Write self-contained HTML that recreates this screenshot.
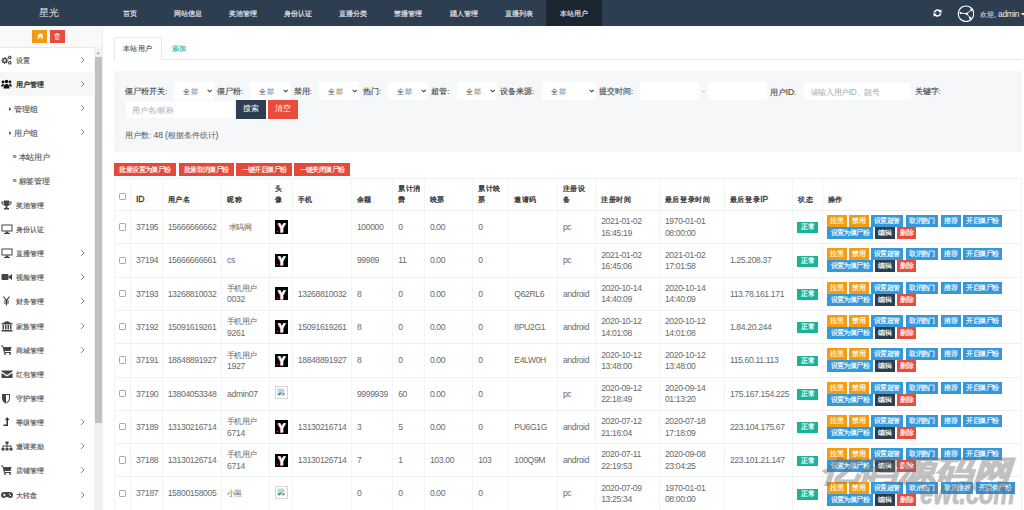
<!DOCTYPE html>
<html><head><meta charset="utf-8"><title>用户管理</title>
<style>
*{box-sizing:border-box;margin:0;padding:0}
html,body{width:1024px;height:510px;overflow:hidden;background:#fff;font-family:"Liberation Sans",sans-serif;color:#676a6c}
.abs{position:absolute}
#hdr{position:absolute;left:0;top:0;width:1024px;height:26px;background:#2e3e51}
#hdr .brand{position:absolute;left:38.6px;top:5.5px;font-size:10.4px;color:#e8ecf0;font-weight:500}
#hdr .nav{position:absolute;top:8.5px;font-size:7.3px;color:#e6e9ed;-webkit-text-stroke:0.15px #e6e9ed;white-space:nowrap}
#hdr .act{position:absolute;left:546px;top:0;width:55.6px;height:26px;background:#1c2631}
#side{position:absolute;left:0;top:26px;width:104px;height:484px;background:#fff}
.sbtn{position:absolute;top:30px;width:15.5px;height:12.5px}
.sitem{position:absolute;left:0;width:93.6px;height:24.2px;font-size:7.4px;color:#555;-webkit-text-stroke:0.15px #555;white-space:nowrap}
.sitem .ic{position:absolute;left:1px;top:7px}
.sitem .tx{position:absolute;left:16px;top:8px}
.sitem .chev{position:absolute;left:80px;top:8px}
#sb{position:absolute;left:93.6px;top:47px;width:9px;height:463px;background:#f1f1f1}
#thumb{position:absolute;left:94.6px;top:57px;width:7px;height:366px;background:#c1c1c1}
.tab{position:absolute;font-size:7px;letter-spacing:0.45px;-webkit-text-stroke:0.15px currentColor;white-space:nowrap}
#filter{position:absolute;left:114.2px;top:71px;width:907.5px;height:81px;background:#f6f7f9}
.lbl{position:absolute;font-size:7.6px;color:#4a4a4a;-webkit-text-stroke:0.15px #4a4a4a;white-space:nowrap;top:87px}
.sel{position:absolute;top:82.2px;height:17.6px;background:#fff;font-size:7px;letter-spacing:0.6px;color:#555}
.sel span{position:absolute;left:9.6px;top:4.6px}
.sel svg{position:absolute;right:2.3px;top:6.6px}
.inp{position:absolute;background:#fff;font-size:7.4px;color:#aaa;white-space:nowrap}
.rbtn{position:absolute;top:163px;height:13px;background:#e5493a;color:#fff;font-size:7px;letter-spacing:-0.6px;-webkit-text-stroke:0.15px #fff;text-align:center;line-height:13px;white-space:nowrap}
.cell{position:absolute;font-size:8.6px;letter-spacing:-0.35px;color:#676a6c;white-space:nowrap;line-height:11.4px}
.cj{font-size:8px;letter-spacing:-0.7px}
.th{position:absolute;font-size:7px;letter-spacing:0.6px;color:#333;-webkit-text-stroke:0.3px #333;white-space:nowrap;line-height:11px}
.vl{position:absolute;width:1px;background:#f2f4f6}
.hl{position:absolute;height:1px;background:#eef0f2}
.cb{position:absolute;width:7px;height:7.4px;border:1px solid #a8a8a8;border-radius:1.2px;background:#fff}
.av{position:absolute;width:13.4px;height:13.4px;background:#000}
.lab{position:absolute;width:20.5px;height:10.9px;background:#1ab394;color:#fff;font-size:7px;letter-spacing:-0.7px;font-weight:bold;text-align:center;line-height:10.9px}
.ab{position:absolute;height:12px;color:#fff;font-size:7px;letter-spacing:-0.55px;-webkit-text-stroke:0.15px #fff;text-align:center;line-height:12px;white-space:nowrap}
.o{background:#f39c12}.bl{background:#3498db}.dk{background:#2c3e50}.rd{background:#e74c3c}
</style></head><body>

<div id="hdr"><div class="brand">星光</div><div class="act"></div>
<div class="nav" style="left:123.4px">首页</div>
<div class="nav" style="left:173.8px">网站信息</div>
<div class="nav" style="left:228.9px">奖池管理</div>
<div class="nav" style="left:284.3px">身份认证</div>
<div class="nav" style="left:339.2px">直播分类</div>
<div class="nav" style="left:394.3px">禁播管理</div>
<div class="nav" style="left:449.5px">踢人管理</div>
<div class="nav" style="left:504.9px">直播列表</div>
<div class="nav" style="left:559.6px">本站用户</div>
<svg class="abs" style="left:932.5px;top:9.2px" width="9" height="8" viewBox="0 0 18 16"><path d="M2.5 7.2A6.5 6.5 0 0 1 13.6 4.2" stroke="#fff" stroke-width="3" fill="none"/><path d="M10.5 6.5L17.5 7.5L16.5 0.5z" fill="#fff"/><path d="M15.5 8.8A6.5 6.5 0 0 1 4.4 11.8" stroke="#fff" stroke-width="3" fill="none"/><path d="M7.5 9.5L0.5 8.5L1.5 15.5z" fill="#fff"/></svg>
<svg class="abs" style="left:956.5px;top:4.8px" width="17.5" height="17.5" viewBox="0 0 36 36"><circle cx="18.5" cy="18" r="16" stroke="#fff" stroke-width="2.4" fill="none"/><path d="M7 16.5L20.3 18L29.5 10.2M20.3 18L27.1 26.7" stroke="#fff" stroke-width="1.8" fill="none"/><circle cx="7.2" cy="16.5" r="2.3" fill="#fff"/><circle cx="20.3" cy="18" r="2.6" fill="#fff"/><circle cx="29.5" cy="10.2" r="2.3" fill="#fff"/><circle cx="27.1" cy="26.7" r="2.5" fill="#fff"/></svg>
<div class="abs" style="left:980px;top:9.3px;font-size:7.4px;color:#e8ecf0;font-weight:500;white-space:nowrap">欢迎, <span style="font-size:8.4px;letter-spacing:-0.35px;font-weight:normal">admin</span></div>
<svg class="abs" style="left:1020.5px;top:13.2px" width="4" height="2.6" viewBox="0 0 5 3"><path d="M0 0h5L2.5 3z" fill="#fff"/></svg>
</div>
<div id="side"></div><div class="abs" style="left:0;top:26px;width:102px;height:20.6px;background:#f9f9f9"></div>
<div class="sbtn" style="left:31.8px;background:#f39c12"><svg class="abs" style="left:4.8px;top:3.4px" width="6.4" height="6" viewBox="0 0 16 14"><path d="M8 0L0 7h2v7h4V9h4v5h4V7h2z" fill="#fff"/><rect x="11" y="1" width="2.5" height="4" fill="#fff"/></svg></div>
<div class="sbtn" style="left:49.8px;background:#e74c3c"><svg class="abs" style="left:4.6px;top:2.8px" width="6.4" height="7.4" viewBox="0 0 12 14"><path d="M0.5 2h11v1.6h-11z M4 0h4v2H4z" fill="#fcd"/><path d="M1.5 4.5h9l-0.8 9H2.3z M3.3 6v6h1.2V6z M5.4 6v6h1.2V6z M7.5 6v6h1.2V6z" fill="#fcd" fill-rule="evenodd"/></svg></div>
<div class="hl" style="left:0;top:46.5px;width:94px;background:#e8e8e8"></div>
<div class="vl" style="left:102.4px;top:26px;height:484px;background:#ececec"></div>
<div class="sitem" style="top:47.9px;">
<span class="ic"><svg width="11" height="10" viewBox="0 0 22 20"><g fill="#444" fill-rule="evenodd"><path d="M14.50 11.00 L14.37 12.37 L12.16 12.93 L11.69 13.80 L12.45 15.95 L11.39 16.82 L9.43 15.66 L8.48 15.94 L7.50 18.00 L6.13 17.87 L5.57 15.66 L4.70 15.19 L2.55 15.95 L1.68 14.89 L2.84 12.93 L2.56 11.98 L0.50 11.00 L0.63 9.63 L2.84 9.07 L3.31 8.20 L2.55 6.05 L3.61 5.18 L5.57 6.34 L6.52 6.06 L7.50 4.00 L8.87 4.13 L9.43 6.34 L10.30 6.81 L12.45 6.05 L13.32 7.11 L12.16 9.07 L12.44 10.02Z M9.8 11a2.3 2.3 0 1 0 -4.6 0a2.3 2.3 0 1 0 4.6 0Z"/><path d="M21.80 5.00 L21.65 6.11 L20.18 6.55 L19.69 7.19 L19.65 8.72 L18.61 9.15 L17.50 8.10 L16.70 7.99 L15.35 8.72 L14.46 8.04 L14.82 6.55 L14.51 5.80 L13.20 5.00 L13.35 3.89 L14.82 3.45 L15.31 2.81 L15.35 1.28 L16.39 0.85 L17.50 1.90 L18.30 2.01 L19.65 1.28 L20.54 1.96 L20.18 3.45 L20.49 4.20Z M18.9 5a1.4 1.4 0 1 0 -2.8 0a1.4 1.4 0 1 0 2.8 0Z"/><path d="M21.80 15.50 L21.65 16.61 L20.18 17.05 L19.69 17.69 L19.65 19.22 L18.61 19.65 L17.50 18.60 L16.70 18.49 L15.35 19.22 L14.46 18.54 L14.82 17.05 L14.51 16.30 L13.20 15.50 L13.35 14.39 L14.82 13.95 L15.31 13.31 L15.35 11.78 L16.39 11.35 L17.50 12.40 L18.30 12.51 L19.65 11.78 L20.54 12.46 L20.18 13.95 L20.49 14.70Z M18.9 15.5a1.4 1.4 0 1 0 -2.8 0a1.4 1.4 0 1 0 2.8 0Z"/></g></svg></span><span class="tx">设置</span>
<svg class="chev" width="5" height="8" viewBox="0 0 5 8"><path d="M1.2 1.2l2.8 2.8-2.8 2.8" stroke="#7a7a7a" stroke-width="0.95" fill="none"/></svg>
</div>
<div class="sitem" style="top:72.0px;background:#f7f7f7;color:#333;-webkit-text-stroke:0.3px #333;">
<span class="ic"><svg width="11" height="10" viewBox="0 0 22 20"><g fill="#111"><circle cx="11" cy="5" r="3.6"/><circle cx="4" cy="6" r="2.8"/><circle cx="18" cy="6" r="2.8"/><path d="M5 19 Q5 10 11 10 Q17 10 17 19Z"/><path d="M0 15 Q0 10 4 10 Q6 10 6.5 11 Q4.5 13 4.5 15Z"/><path d="M22 15 Q22 10 18 10 Q16 10 15.5 11 Q17.5 13 17.5 15Z"/></g></svg></span><span class="tx">用户管理</span>
<svg class="chev" width="5" height="8" viewBox="0 0 5 8"><path d="M1.2 1.2l2.8 2.8-2.8 2.8" stroke="#7a7a7a" stroke-width="0.95" fill="none"/></svg>
</div>
<div class="sitem" style="top:96.2px;">
<svg class="abs" style="left:8.5px;top:10.5px" width="2.5" height="4" viewBox="0 0 3 5"><path d="M0 0l3 2.5L0 5z" fill="#555"/></svg><span class="tx" style="left:14.2px;top:7.6px;font-size:8px;letter-spacing:-0.2px">管理组</span>
<svg class="chev" width="5" height="8" viewBox="0 0 5 8"><path d="M1.2 1.2l2.8 2.8-2.8 2.8" stroke="#7a7a7a" stroke-width="0.95" fill="none"/></svg>
</div>
<div class="sitem" style="top:120.3px;">
<svg class="abs" style="left:8.5px;top:10.5px" width="2.5" height="4" viewBox="0 0 3 5"><path d="M0 0l3 2.5L0 5z" fill="#555"/></svg><span class="tx" style="left:14.2px;top:7.6px;font-size:8px;letter-spacing:-0.2px">用户组</span>
<svg class="chev" width="5" height="8" viewBox="0 0 5 8"><path d="M1.2 1.2l2.8 2.8-2.8 2.8" stroke="#7a7a7a" stroke-width="0.95" fill="none"/></svg>
</div>
<div class="sitem" style="top:144.5px;">
<span class="abs" style="left:12.5px;top:7.6px;font-size:7.5px;font-family:&quot;Liberation Sans&quot;,sans-serif">&raquo;</span><span class="tx" style="left:18.6px;top:7.6px;font-size:8px;letter-spacing:-0.3px">本站用户</span>
</div>
<div class="sitem" style="top:168.7px;">
<span class="abs" style="left:12.5px;top:7.6px;font-size:7.5px;font-family:&quot;Liberation Sans&quot;,sans-serif">&raquo;</span><span class="tx" style="left:18.6px;top:7.6px;font-size:8px;letter-spacing:-0.3px">标签管理</span>
</div>
<div class="sitem" style="top:192.8px;">
<span class="ic"><svg width="11" height="10" viewBox="0 0 22 20"><g fill="#444"><path d="M6 1h10v7q0 5-5 5t-5-5z"/><path d="M9 13h4v3h3v3H6v-3h3z"/><path d="M6 3H1v3q0 4 5 4v-2q-3 0-3-2V5h3z"/><path d="M16 3h5v3q0 4-5 4v-2q3 0 3-2V5h-3z"/></g></svg></span><span class="tx">奖池管理</span>
</div>
<div class="sitem" style="top:217.0px;">
<span class="ic"><svg width="12" height="10" viewBox="0 0 24 20"><g fill="#444"><path d="M1 1h22v14H1z M3 3v10h18V3z" fill-rule="evenodd"/><path d="M9 15h6v3h3v2H6v-2h3z"/></g></svg></span><span class="tx">身份认证</span>
</div>
<div class="sitem" style="top:241.1px;">
<span class="ic"><svg width="12" height="10" viewBox="0 0 24 20"><g fill="#444"><path d="M1 1h22v14H1z M3 3v10h18V3z" fill-rule="evenodd"/><path d="M9 15h6v3h3v2H6v-2h3z"/></g></svg></span><span class="tx">直播管理</span>
<svg class="chev" width="5" height="8" viewBox="0 0 5 8"><path d="M1.2 1.2l2.8 2.8-2.8 2.8" stroke="#7a7a7a" stroke-width="0.95" fill="none"/></svg>
</div>
<div class="sitem" style="top:265.2px;">
<span class="ic"><svg width="12" height="10" viewBox="0 0 24 20"><g fill="#444"><rect x="1" y="4" width="14" height="12" rx="2"/><path d="M15 9l7-5v12l-7-5z"/></g></svg></span><span class="tx">视频管理</span>
<svg class="chev" width="5" height="8" viewBox="0 0 5 8"><path d="M1.2 1.2l2.8 2.8-2.8 2.8" stroke="#7a7a7a" stroke-width="0.95" fill="none"/></svg>
</div>
<div class="sitem" style="top:289.4px;">
<span class="ic"><svg width="11" height="10" viewBox="0 0 22 20"><g stroke="#444" stroke-width="2.4" fill="none"><path d="M5 1l6 8 6-8M11 9v10M6 10h10M6 14h10"/></g></svg></span><span class="tx">财务管理</span>
<svg class="chev" width="5" height="8" viewBox="0 0 5 8"><path d="M1.2 1.2l2.8 2.8-2.8 2.8" stroke="#7a7a7a" stroke-width="0.95" fill="none"/></svg>
</div>
<div class="sitem" style="top:313.5px;">
<span class="ic"><svg width="12" height="11" viewBox="0 0 24 22"><g fill="#444"><path d="M12 0L1 5v2h22V5z"/><rect x="3" y="8" width="3" height="9"/><rect x="8" y="8" width="3" height="9"/><rect x="13" y="8" width="3" height="9"/><rect x="18" y="8" width="3" height="9"/><rect x="1" y="18" width="22" height="3"/></g></svg></span><span class="tx">家族管理</span>
<svg class="chev" width="5" height="8" viewBox="0 0 5 8"><path d="M1.2 1.2l2.8 2.8-2.8 2.8" stroke="#7a7a7a" stroke-width="0.95" fill="none"/></svg>
</div>
<div class="sitem" style="top:337.7px;">
<span class="ic"><svg width="11" height="10" viewBox="0 0 22 20"><g fill="#444"><path d="M0 1h4l1 3h16l-2 8H7l1 2h12v2H6L3 3H0z"/><circle cx="8" cy="18" r="1.8"/><circle cx="18" cy="18" r="1.8"/></g></svg></span><span class="tx">商城管理</span>
<svg class="chev" width="5" height="8" viewBox="0 0 5 8"><path d="M1.2 1.2l2.8 2.8-2.8 2.8" stroke="#7a7a7a" stroke-width="0.95" fill="none"/></svg>
</div>
<div class="sitem" style="top:361.8px;">
<span class="ic"><svg width="12" height="10" viewBox="0 0 24 20"><g fill="#444"><path d="M1 3h22v2l-11 7L1 5z"/><path d="M1 8l11 7 11-7v10H1z"/></g></svg></span><span class="tx">红包管理</span>
</div>
<div class="sitem" style="top:386.0px;">
<span class="ic"><svg width="10" height="11" viewBox="0 0 20 22"><g fill="#444"><path d="M2 2h16v8q0 8-8 11Q2 18 2 10z M10 4v15q6-3 6-9V4z" fill-rule="evenodd"/></g></svg></span><span class="tx">守护管理</span>
</div>
<div class="sitem" style="top:410.1px;">
<span class="ic"><svg width="10" height="10" viewBox="0 0 20 20"><g fill="#333"><path d="M12 0l5 6h-3v12H5v-3h6V6H8z"/></g></svg></span><span class="tx">等级管理</span>
<svg class="chev" width="5" height="8" viewBox="0 0 5 8"><path d="M1.2 1.2l2.8 2.8-2.8 2.8" stroke="#7a7a7a" stroke-width="0.95" fill="none"/></svg>
</div>
<div class="sitem" style="top:434.3px;">
<span class="ic"><svg width="12" height="10" viewBox="0 0 24 20"><g fill="#444"><rect x="9" y="1" width="6" height="5"/><rect x="1" y="14" width="6" height="5"/><rect x="9" y="14" width="6" height="5"/><rect x="17" y="14" width="6" height="5"/><path d="M11 6h2v3h8v5h-2v-3h-6v3h-2v-3H5v3H3V9h8z"/></g></svg></span><span class="tx">邀请奖励</span>
<svg class="chev" width="5" height="8" viewBox="0 0 5 8"><path d="M1.2 1.2l2.8 2.8-2.8 2.8" stroke="#7a7a7a" stroke-width="0.95" fill="none"/></svg>
</div>
<div class="sitem" style="top:458.4px;">
<span class="ic"><svg width="11" height="10" viewBox="0 0 22 20"><g fill="#444"><path d="M0 1h4l1 3h16l-2 8H7l1 2h12v2H6L3 3H0z"/><circle cx="8" cy="18" r="1.8"/><circle cx="18" cy="18" r="1.8"/></g></svg></span><span class="tx">店铺管理</span>
<svg class="chev" width="5" height="8" viewBox="0 0 5 8"><path d="M1.2 1.2l2.8 2.8-2.8 2.8" stroke="#7a7a7a" stroke-width="0.95" fill="none"/></svg>
</div>
<div class="sitem" style="top:482.6px;">
<span class="ic"><svg width="12" height="10" viewBox="0 0 24 20"><g fill="#444"><path d="M6 4h12q6 0 6 6t-6 6q-3 0-4-2h-4q-1 2-4 2Q0 16 0 10t6-6z"/></g><g fill="#fff"><rect x="4" y="9" width="5" height="2"/><rect x="5.5" y="7.5" width="2" height="5"/><circle cx="17" cy="8" r="1.3"/><circle cx="19" cy="11" r="1.3"/></g></svg></span><span class="tx">大转盘</span>
<svg class="chev" width="5" height="8" viewBox="0 0 5 8"><path d="M1.2 1.2l2.8 2.8-2.8 2.8" stroke="#7a7a7a" stroke-width="0.95" fill="none"/></svg>
</div>
<div id="sb"></div><div id="thumb"></div>
<svg class="abs" style="left:96px;top:51.5px" width="4" height="2.5" viewBox="0 0 5 3"><path d="M0 3L2.5 0 5 3z" fill="#a3a3a3"/></svg>
<div class="abs" style="left:114.2px;top:37px;width:47.8px;height:23px;border:1px solid #e7eaec;border-bottom:none;background:#fff"></div>
<div class="hl" style="left:161.5px;top:59.4px;width:860px;background:#e7eaec"></div>
<div class="tab" style="left:123px;top:44.2px;color:#555">本站用户</div>
<div class="tab" style="left:171.6px;top:44.2px;color:#1ab394">添加</div>
<div id="filter"></div>
<div class="lbl" style="left:125.2px">僵尸粉开关:</div>
<div class="lbl" style="left:217px">僵尸粉:</div>
<div class="lbl" style="left:293.6px">禁用:</div>
<div class="lbl" style="left:362.7px">热门:</div>
<div class="lbl" style="left:431.4px">超管:</div>
<div class="lbl" style="left:500.3px">设备来源:</div>
<div class="lbl" style="left:598.9px">提交时间:</div>
<div class="lbl" style="left:769.8px">用户<span style='font-size:8.4px;letter-spacing:-0.2px'>ID</span>:</div>
<div class="lbl" style="left:914.5px">关键字:</div>
<div class="sel" style="left:173.6px;width:40.6px"><span>全部</span><svg width="5.4" height="4" viewBox="0 0 10 7"><path d="M1.2 1.5l3.8 3.6 3.8-3.6" stroke="#3b4654" stroke-width="1.9" fill="none"/></svg></div>
<div class="sel" style="left:249.9px;width:40.3px"><span>全部</span><svg width="5.4" height="4" viewBox="0 0 10 7"><path d="M1.2 1.5l3.8 3.6 3.8-3.6" stroke="#3b4654" stroke-width="1.9" fill="none"/></svg></div>
<div class="sel" style="left:318.9px;width:40.6px"><span>全部</span><svg width="5.4" height="4" viewBox="0 0 10 7"><path d="M1.2 1.5l3.8 3.6 3.8-3.6" stroke="#3b4654" stroke-width="1.9" fill="none"/></svg></div>
<div class="sel" style="left:387.7px;width:40.6px"><span>全部</span><svg width="5.4" height="4" viewBox="0 0 10 7"><path d="M1.2 1.5l3.8 3.6 3.8-3.6" stroke="#3b4654" stroke-width="1.9" fill="none"/></svg></div>
<div class="sel" style="left:456.6px;width:40.6px"><span>全部</span><svg width="5.4" height="4" viewBox="0 0 10 7"><path d="M1.2 1.5l3.8 3.6 3.8-3.6" stroke="#3b4654" stroke-width="1.9" fill="none"/></svg></div>
<div class="sel" style="left:541.7px;width:54.6px"><span>全部</span><svg width="5.4" height="4" viewBox="0 0 10 7"><path d="M1.2 1.5l3.8 3.6 3.8-3.6" stroke="#3b4654" stroke-width="1.9" fill="none"/></svg></div>
<div class="inp" style="left:640px;top:82.2px;width:59.4px;height:17.8px"></div>
<div class="abs" style="left:702.2px;top:85.5px;font-size:8px;color:#888">-</div>
<div class="inp" style="left:707.5px;top:82.2px;width:59.7px;height:17.8px"></div>
<div class="inp" style="left:803.9px;top:82.5px;width:107.4px;height:17.5px;padding:4px 0 0 7px;font-size:7.7px;letter-spacing:-0.45px">请输入用户<span style="font-size:8.4px;letter-spacing:-0.2px">ID</span>、靓号</div>
<div class="inp" style="left:125.5px;top:100.6px;width:108.7px;height:17.2px;padding:4px 0 0 6px;font-size:8px">用户名/昵称</div>
<div class="abs" style="left:236px;top:100.3px;width:29.9px;height:18.7px;background:#2c3e50;color:#fff;font-size:8px;text-align:center;line-height:18.7px">搜索</div>
<div class="abs" style="left:268px;top:100.3px;width:29.6px;height:18.7px;background:#e74c3c;color:#fff;font-size:8px;text-align:center;line-height:18.7px">清空</div>
<div class="abs" style="left:125.2px;top:130.4px;font-size:7.9px;color:#555;font-weight:500;white-space:nowrap">用户数:<span style="font-size:8.6px;letter-spacing:-0.2px;font-weight:normal"> 48 (</span>根据条件统计<span style="font-size:8.6px;font-weight:normal">)</span></div>
<div class="rbtn" style="left:113.9px;width:62.1px">批量设置为僵尸粉</div>
<div class="rbtn" style="left:178.5px;width:55.5px">批量取消僵尸粉</div>
<div class="rbtn" style="left:236px;width:56.0px">一键开启僵尸粉</div>
<div class="rbtn" style="left:294px;width:56.0px">一键关闭僵尸粉</div>
<div class="vl" style="left:114.0px;top:178.2px;height:331.8px"></div>
<div class="vl" style="left:130.1px;top:178.2px;height:331.8px"></div>
<div class="vl" style="left:161.7px;top:178.2px;height:331.8px"></div>
<div class="vl" style="left:221.1px;top:178.2px;height:331.8px"></div>
<div class="vl" style="left:269.1px;top:178.2px;height:331.8px"></div>
<div class="vl" style="left:291.8px;top:178.2px;height:331.8px"></div>
<div class="vl" style="left:350.9px;top:178.2px;height:331.8px"></div>
<div class="vl" style="left:392.2px;top:178.2px;height:331.8px"></div>
<div class="vl" style="left:423.9px;top:178.2px;height:331.8px"></div>
<div class="vl" style="left:472.2px;top:178.2px;height:331.8px"></div>
<div class="vl" style="left:508.3px;top:178.2px;height:331.8px"></div>
<div class="vl" style="left:556.9px;top:178.2px;height:331.8px"></div>
<div class="vl" style="left:595.2px;top:178.2px;height:331.8px"></div>
<div class="vl" style="left:658.9px;top:178.2px;height:331.8px"></div>
<div class="vl" style="left:723.9px;top:178.2px;height:331.8px"></div>
<div class="vl" style="left:792.0px;top:178.2px;height:331.8px"></div>
<div class="vl" style="left:821.9px;top:178.2px;height:331.8px"></div>
<div class="vl" style="left:1020.9px;top:178.2px;height:331.8px"></div>
<div class="hl" style="left:114.5px;top:177.7px;width:906.9px"></div>
<div class="hl" style="left:114.5px;top:210.0px;width:906.9px"></div>
<div class="hl" style="left:114.5px;top:243.3px;width:906.9px"></div>
<div class="hl" style="left:114.5px;top:276.6px;width:906.9px"></div>
<div class="hl" style="left:114.5px;top:309.9px;width:906.9px"></div>
<div class="hl" style="left:114.5px;top:343.2px;width:906.9px"></div>
<div class="hl" style="left:114.5px;top:376.5px;width:906.9px"></div>
<div class="hl" style="left:114.5px;top:409.8px;width:906.9px"></div>
<div class="hl" style="left:114.5px;top:443.1px;width:906.9px"></div>
<div class="hl" style="left:114.5px;top:476.4px;width:906.9px"></div>
<div class="hl" style="left:114.5px;top:509.7px;width:906.9px"></div>
<div class="cb" style="left:119px;top:192.5px"></div>
<div class="th" style="left:136.1px;top:194.3px"><span style='font-size:8.6px;letter-spacing:-0.2px'>ID</span></div>
<div class="th" style="left:167.7px;top:194.3px">用户名</div>
<div class="th" style="left:227.1px;top:194.3px">昵称</div>
<div class="th" style="left:275.1px;top:183px">头<br>像</div>
<div class="th" style="left:297.8px;top:194.3px">手机</div>
<div class="th" style="left:356.9px;top:194.3px">余额</div>
<div class="th" style="left:398.2px;top:183px">累计消<br>费</div>
<div class="th" style="left:429.9px;top:194.3px">映票</div>
<div class="th" style="left:478.2px;top:183px">累计映<br>票</div>
<div class="th" style="left:514.3px;top:194.3px">邀请码</div>
<div class="th" style="left:562.9px;top:183px">注册设<br>备</div>
<div class="th" style="left:601.2px;top:194.3px">注册时间</div>
<div class="th" style="left:664.9px;top:194.3px">最后登录时间</div>
<div class="th" style="left:729.9px;top:194.3px">最后登录<span style='font-size:8.6px;letter-spacing:-0.2px'>IP</span></div>
<div class="th" style="left:798.0px;top:194.3px">状态</div>
<div class="th" style="left:827.9px;top:194.3px">操作</div>
<div class="cb" style="left:119px;top:223.2px"></div>
<div class="cell" style="left:136.1px;top:222.1px">37195</div>
<div class="cell" style="left:167.7px;top:222.1px">15666666662</div>
<div class="cell" style="left:229.1px;top:222.1px"><span class="cj">求码网</span></div>
<div class="cell" style="left:356.9px;top:222.1px">100000</div>
<div class="cell" style="left:398.2px;top:222.1px">0</div>
<div class="cell" style="left:429.9px;top:222.1px">0.00</div>
<div class="cell" style="left:478.2px;top:222.1px">0</div>
<div class="cell" style="left:562.9px;top:222.1px">pc</div>
<div class="cell" style="left:601.2px;top:216.3px">2021-01-02<br>16:45:19</div>
<div class="cell" style="left:664.9px;top:216.3px">1970-01-01<br>08:00:00</div>
<div class="av" style="left:274.6px;top:220.4px"><svg width="13.4" height="13.4" viewBox="0 0 20 20"><path d="M4 3.5h3.6l2.4 5 2.4-5H16l-4.2 7.5v6h-3.6v-6z" fill="#ff2d55" transform="translate(-0.9,0.6)"/><path d="M4 3.5h3.6l2.4 5 2.4-5H16l-4.2 7.5v6h-3.6v-6z" fill="#25f4ee" transform="translate(0.9,-0.3)"/><path d="M4 3.5h3.6l2.4 5 2.4-5H16l-4.2 7.5v6h-3.6v-6z" fill="#fff"/><circle cx="3.5" cy="15.5" r="1" fill="#ff2d55"/></svg></div>
<div class="lab" style="left:797.3px;top:222.4px">正常</div>
<div class="ab o" style="left:827.1px;top:215.1px;width:19.5px">拉黑</div>
<div class="ab o" style="left:848.8px;top:215.1px;width:19.8px">禁用</div>
<div class="ab bl" style="left:870.9px;top:215.1px;width:32.1px">设置超管</div>
<div class="ab bl" style="left:905.9px;top:215.1px;width:32.2px">取消热门</div>
<div class="ab bl" style="left:941px;top:215.1px;width:19.6px">推荐</div>
<div class="ab bl" style="left:963px;top:215.1px;width:39.1px">开启僵尸粉</div>
<div class="ab bl" style="left:827.1px;top:227.1px;width:45.7px">设置为僵尸粉</div>
<div class="ab dk" style="left:875.1px;top:227.1px;width:19.6px">编辑</div>
<div class="ab rd" style="left:896.9px;top:227.1px;width:19.5px">删除</div>
<div class="cb" style="left:119px;top:256.6px"></div>
<div class="cell" style="left:136.1px;top:255.4px">37194</div>
<div class="cell" style="left:167.7px;top:255.4px">15666666661</div>
<div class="cell" style="left:227.1px;top:255.4px">cs</div>
<div class="cell" style="left:356.9px;top:255.4px">99989</div>
<div class="cell" style="left:398.2px;top:255.4px">11</div>
<div class="cell" style="left:429.9px;top:255.4px">0.00</div>
<div class="cell" style="left:478.2px;top:255.4px">0</div>
<div class="cell" style="left:562.9px;top:255.4px">pc</div>
<div class="cell" style="left:601.2px;top:249.7px">2021-01-02<br>16:45:06</div>
<div class="cell" style="left:664.9px;top:249.7px">2021-01-02<br>17:01:58</div>
<div class="cell" style="left:729.9px;top:255.4px">1.25.208.37</div>
<div class="av" style="left:274.6px;top:253.8px"><svg width="13.4" height="13.4" viewBox="0 0 20 20"><path d="M4 3.5h3.6l2.4 5 2.4-5H16l-4.2 7.5v6h-3.6v-6z" fill="#ff2d55" transform="translate(-0.9,0.6)"/><path d="M4 3.5h3.6l2.4 5 2.4-5H16l-4.2 7.5v6h-3.6v-6z" fill="#25f4ee" transform="translate(0.9,-0.3)"/><path d="M4 3.5h3.6l2.4 5 2.4-5H16l-4.2 7.5v6h-3.6v-6z" fill="#fff"/><circle cx="3.5" cy="15.5" r="1" fill="#ff2d55"/></svg></div>
<div class="lab" style="left:797.3px;top:255.7px">正常</div>
<div class="ab o" style="left:827.1px;top:248.4px;width:19.5px">拉黑</div>
<div class="ab o" style="left:848.8px;top:248.4px;width:19.8px">禁用</div>
<div class="ab bl" style="left:870.9px;top:248.4px;width:32.1px">设置超管</div>
<div class="ab bl" style="left:905.9px;top:248.4px;width:32.2px">取消热门</div>
<div class="ab bl" style="left:941px;top:248.4px;width:19.6px">推荐</div>
<div class="ab bl" style="left:963px;top:248.4px;width:39.1px">开启僵尸粉</div>
<div class="ab bl" style="left:827.1px;top:260.4px;width:45.7px">设置为僵尸粉</div>
<div class="ab dk" style="left:875.1px;top:260.4px;width:19.6px">编辑</div>
<div class="ab rd" style="left:896.9px;top:260.4px;width:19.5px">删除</div>
<div class="cb" style="left:119px;top:289.9px"></div>
<div class="cell" style="left:136.1px;top:288.7px">37193</div>
<div class="cell" style="left:167.7px;top:288.7px">13268810032</div>
<div class="cell" style="left:227.1px;top:283.0px"><span class="cj">手机用户</span><br>0032</div>
<div class="cell" style="left:297.8px;top:288.7px">13268810032</div>
<div class="cell" style="left:356.9px;top:288.7px">8</div>
<div class="cell" style="left:398.2px;top:288.7px">0</div>
<div class="cell" style="left:429.9px;top:288.7px">0.00</div>
<div class="cell" style="left:478.2px;top:288.7px">0</div>
<div class="cell" style="left:514.3px;top:288.7px">Q62RL6</div>
<div class="cell" style="left:562.9px;top:288.7px">android</div>
<div class="cell" style="left:601.2px;top:283.0px">2020-10-14<br>14:40:09</div>
<div class="cell" style="left:664.9px;top:283.0px">2020-10-14<br>14:40:09</div>
<div class="cell" style="left:729.9px;top:288.7px">113.78.161.171</div>
<div class="av" style="left:274.6px;top:287.1px"><svg width="13.4" height="13.4" viewBox="0 0 20 20"><path d="M4 3.5h3.6l2.4 5 2.4-5H16l-4.2 7.5v6h-3.6v-6z" fill="#ff2d55" transform="translate(-0.9,0.6)"/><path d="M4 3.5h3.6l2.4 5 2.4-5H16l-4.2 7.5v6h-3.6v-6z" fill="#25f4ee" transform="translate(0.9,-0.3)"/><path d="M4 3.5h3.6l2.4 5 2.4-5H16l-4.2 7.5v6h-3.6v-6z" fill="#fff"/><circle cx="3.5" cy="15.5" r="1" fill="#ff2d55"/></svg></div>
<div class="lab" style="left:797.3px;top:289.0px">正常</div>
<div class="ab o" style="left:827.1px;top:281.7px;width:19.5px">拉黑</div>
<div class="ab o" style="left:848.8px;top:281.7px;width:19.8px">禁用</div>
<div class="ab bl" style="left:870.9px;top:281.7px;width:32.1px">设置超管</div>
<div class="ab bl" style="left:905.9px;top:281.7px;width:32.2px">取消热门</div>
<div class="ab bl" style="left:941px;top:281.7px;width:19.6px">推荐</div>
<div class="ab bl" style="left:963px;top:281.7px;width:39.1px">开启僵尸粉</div>
<div class="ab bl" style="left:827.1px;top:293.7px;width:45.7px">设置为僵尸粉</div>
<div class="ab dk" style="left:875.1px;top:293.7px;width:19.6px">编辑</div>
<div class="ab rd" style="left:896.9px;top:293.7px;width:19.5px">删除</div>
<div class="cb" style="left:119px;top:323.1px"></div>
<div class="cell" style="left:136.1px;top:321.9px">37192</div>
<div class="cell" style="left:167.7px;top:321.9px">15091619261</div>
<div class="cell" style="left:227.1px;top:316.2px"><span class="cj">手机用户</span><br>9261</div>
<div class="cell" style="left:297.8px;top:321.9px">15091619261</div>
<div class="cell" style="left:356.9px;top:321.9px">8</div>
<div class="cell" style="left:398.2px;top:321.9px">0</div>
<div class="cell" style="left:429.9px;top:321.9px">0.00</div>
<div class="cell" style="left:478.2px;top:321.9px">0</div>
<div class="cell" style="left:514.3px;top:321.9px">8PU2G1</div>
<div class="cell" style="left:562.9px;top:321.9px">android</div>
<div class="cell" style="left:601.2px;top:316.2px">2020-10-12<br>14:01:08</div>
<div class="cell" style="left:664.9px;top:316.2px">2020-10-12<br>14:01:08</div>
<div class="cell" style="left:729.9px;top:321.9px">1.84.20.244</div>
<div class="av" style="left:274.6px;top:320.3px"><svg width="13.4" height="13.4" viewBox="0 0 20 20"><path d="M4 3.5h3.6l2.4 5 2.4-5H16l-4.2 7.5v6h-3.6v-6z" fill="#ff2d55" transform="translate(-0.9,0.6)"/><path d="M4 3.5h3.6l2.4 5 2.4-5H16l-4.2 7.5v6h-3.6v-6z" fill="#25f4ee" transform="translate(0.9,-0.3)"/><path d="M4 3.5h3.6l2.4 5 2.4-5H16l-4.2 7.5v6h-3.6v-6z" fill="#fff"/><circle cx="3.5" cy="15.5" r="1" fill="#ff2d55"/></svg></div>
<div class="lab" style="left:797.3px;top:322.3px">正常</div>
<div class="ab o" style="left:827.1px;top:315.0px;width:19.5px">拉黑</div>
<div class="ab o" style="left:848.8px;top:315.0px;width:19.8px">禁用</div>
<div class="ab bl" style="left:870.9px;top:315.0px;width:32.1px">设置超管</div>
<div class="ab bl" style="left:905.9px;top:315.0px;width:32.2px">取消热门</div>
<div class="ab bl" style="left:941px;top:315.0px;width:19.6px">推荐</div>
<div class="ab bl" style="left:963px;top:315.0px;width:39.1px">开启僵尸粉</div>
<div class="ab bl" style="left:827.1px;top:327.0px;width:45.7px">设置为僵尸粉</div>
<div class="ab dk" style="left:875.1px;top:327.0px;width:19.6px">编辑</div>
<div class="ab rd" style="left:896.9px;top:327.0px;width:19.5px">删除</div>
<div class="cb" style="left:119px;top:356.4px"></div>
<div class="cell" style="left:136.1px;top:355.2px">37191</div>
<div class="cell" style="left:167.7px;top:355.2px">18848891927</div>
<div class="cell" style="left:227.1px;top:349.6px"><span class="cj">手机用户</span><br>1927</div>
<div class="cell" style="left:297.8px;top:355.2px">18848891927</div>
<div class="cell" style="left:356.9px;top:355.2px">8</div>
<div class="cell" style="left:398.2px;top:355.2px">0</div>
<div class="cell" style="left:429.9px;top:355.2px">0.00</div>
<div class="cell" style="left:478.2px;top:355.2px">0</div>
<div class="cell" style="left:514.3px;top:355.2px">E4LW0H</div>
<div class="cell" style="left:562.9px;top:355.2px">android</div>
<div class="cell" style="left:601.2px;top:349.6px">2020-10-12<br>13:48:00</div>
<div class="cell" style="left:664.9px;top:349.6px">2020-10-12<br>13:48:00</div>
<div class="cell" style="left:729.9px;top:355.2px">115.60.11.113</div>
<div class="av" style="left:274.6px;top:353.6px"><svg width="13.4" height="13.4" viewBox="0 0 20 20"><path d="M4 3.5h3.6l2.4 5 2.4-5H16l-4.2 7.5v6h-3.6v-6z" fill="#ff2d55" transform="translate(-0.9,0.6)"/><path d="M4 3.5h3.6l2.4 5 2.4-5H16l-4.2 7.5v6h-3.6v-6z" fill="#25f4ee" transform="translate(0.9,-0.3)"/><path d="M4 3.5h3.6l2.4 5 2.4-5H16l-4.2 7.5v6h-3.6v-6z" fill="#fff"/><circle cx="3.5" cy="15.5" r="1" fill="#ff2d55"/></svg></div>
<div class="lab" style="left:797.3px;top:355.6px">正常</div>
<div class="ab o" style="left:827.1px;top:348.3px;width:19.5px">拉黑</div>
<div class="ab o" style="left:848.8px;top:348.3px;width:19.8px">禁用</div>
<div class="ab bl" style="left:870.9px;top:348.3px;width:32.1px">设置超管</div>
<div class="ab bl" style="left:905.9px;top:348.3px;width:32.2px">取消热门</div>
<div class="ab bl" style="left:941px;top:348.3px;width:19.6px">推荐</div>
<div class="ab bl" style="left:963px;top:348.3px;width:39.1px">开启僵尸粉</div>
<div class="ab bl" style="left:827.1px;top:360.3px;width:45.7px">设置为僵尸粉</div>
<div class="ab dk" style="left:875.1px;top:360.3px;width:19.6px">编辑</div>
<div class="ab rd" style="left:896.9px;top:360.3px;width:19.5px">删除</div>
<div class="cb" style="left:119px;top:389.8px"></div>
<div class="cell" style="left:136.1px;top:388.6px">37190</div>
<div class="cell" style="left:167.7px;top:388.6px">13804053348</div>
<div class="cell" style="left:227.1px;top:388.6px">admin07</div>
<div class="cell" style="left:356.9px;top:388.6px">9999939</div>
<div class="cell" style="left:398.2px;top:388.6px">60</div>
<div class="cell" style="left:429.9px;top:388.6px">0.00</div>
<div class="cell" style="left:478.2px;top:388.6px">0</div>
<div class="cell" style="left:562.9px;top:388.6px">pc</div>
<div class="cell" style="left:601.2px;top:382.9px">2020-09-12<br>22:18:49</div>
<div class="cell" style="left:664.9px;top:382.9px">2020-09-14<br>01:13:20</div>
<div class="cell" style="left:729.9px;top:388.6px">175.167.154.225</div>
<div class="abs" style="left:274.6px;top:385.6px;width:13.4px;height:13.8px;border:1px solid #d6d6d6;background:#fff"><svg class="abs" style="left:1.5px;top:1.5px" width="9" height="9" viewBox="0 0 18 18"><path d="M1 1h10l4 4v3L9 14H1z" fill="#b9d3f0"/><path d="M1 14q3-6 9-5l-5 6z" fill="#3c9b3c"/><path d="M11 1v4h4" fill="#eee" stroke="#999" stroke-width="0.8"/><path d="M9 15l6-6v5z" fill="#3c9b3c"/></svg></div>
<div class="lab" style="left:797.3px;top:388.9px">正常</div>
<div class="ab o" style="left:827.1px;top:381.6px;width:19.5px">拉黑</div>
<div class="ab o" style="left:848.8px;top:381.6px;width:19.8px">禁用</div>
<div class="ab bl" style="left:870.9px;top:381.6px;width:32.1px">设置超管</div>
<div class="ab bl" style="left:905.9px;top:381.6px;width:32.2px">取消热门</div>
<div class="ab bl" style="left:941px;top:381.6px;width:19.6px">推荐</div>
<div class="ab bl" style="left:963px;top:381.6px;width:39.1px">开启僵尸粉</div>
<div class="ab bl" style="left:827.1px;top:393.6px;width:45.7px">设置为僵尸粉</div>
<div class="ab dk" style="left:875.1px;top:393.6px;width:19.6px">编辑</div>
<div class="ab rd" style="left:896.9px;top:393.6px;width:19.5px">删除</div>
<div class="cb" style="left:119px;top:423.0px"></div>
<div class="cell" style="left:136.1px;top:421.8px">37189</div>
<div class="cell" style="left:167.7px;top:421.8px">13130216714</div>
<div class="cell" style="left:227.1px;top:416.1px"><span class="cj">手机用户</span><br>6714</div>
<div class="cell" style="left:297.8px;top:421.8px">13130216714</div>
<div class="cell" style="left:356.9px;top:421.8px">3</div>
<div class="cell" style="left:398.2px;top:421.8px">5</div>
<div class="cell" style="left:429.9px;top:421.8px">0.00</div>
<div class="cell" style="left:478.2px;top:421.8px">0</div>
<div class="cell" style="left:514.3px;top:421.8px">PU6G1G</div>
<div class="cell" style="left:562.9px;top:421.8px">android</div>
<div class="cell" style="left:601.2px;top:416.1px">2020-07-12<br>21:16:04</div>
<div class="cell" style="left:664.9px;top:416.1px">2020-07-18<br>17:18:09</div>
<div class="cell" style="left:729.9px;top:421.8px">223.104.175.67</div>
<div class="av" style="left:274.6px;top:420.2px"><svg width="13.4" height="13.4" viewBox="0 0 20 20"><path d="M4 3.5h3.6l2.4 5 2.4-5H16l-4.2 7.5v6h-3.6v-6z" fill="#ff2d55" transform="translate(-0.9,0.6)"/><path d="M4 3.5h3.6l2.4 5 2.4-5H16l-4.2 7.5v6h-3.6v-6z" fill="#25f4ee" transform="translate(0.9,-0.3)"/><path d="M4 3.5h3.6l2.4 5 2.4-5H16l-4.2 7.5v6h-3.6v-6z" fill="#fff"/><circle cx="3.5" cy="15.5" r="1" fill="#ff2d55"/></svg></div>
<div class="lab" style="left:797.3px;top:422.2px">正常</div>
<div class="ab o" style="left:827.1px;top:414.9px;width:19.5px">拉黑</div>
<div class="ab o" style="left:848.8px;top:414.9px;width:19.8px">禁用</div>
<div class="ab bl" style="left:870.9px;top:414.9px;width:32.1px">设置超管</div>
<div class="ab bl" style="left:905.9px;top:414.9px;width:32.2px">取消热门</div>
<div class="ab bl" style="left:941px;top:414.9px;width:19.6px">推荐</div>
<div class="ab bl" style="left:963px;top:414.9px;width:39.1px">开启僵尸粉</div>
<div class="ab bl" style="left:827.1px;top:426.9px;width:45.7px">设置为僵尸粉</div>
<div class="ab dk" style="left:875.1px;top:426.9px;width:19.6px">编辑</div>
<div class="ab rd" style="left:896.9px;top:426.9px;width:19.5px">删除</div>
<div class="cb" style="left:119px;top:456.3px"></div>
<div class="cell" style="left:136.1px;top:455.1px">37188</div>
<div class="cell" style="left:167.7px;top:455.1px">13130126714</div>
<div class="cell" style="left:227.1px;top:449.4px"><span class="cj">手机用户</span><br>6714</div>
<div class="cell" style="left:297.8px;top:455.1px">13130126714</div>
<div class="cell" style="left:356.9px;top:455.1px">7</div>
<div class="cell" style="left:398.2px;top:455.1px">1</div>
<div class="cell" style="left:429.9px;top:455.1px">103.00</div>
<div class="cell" style="left:478.2px;top:455.1px">103</div>
<div class="cell" style="left:514.3px;top:455.1px">100Q9M</div>
<div class="cell" style="left:562.9px;top:455.1px">android</div>
<div class="cell" style="left:601.2px;top:449.4px">2020-07-11<br>22:19:53</div>
<div class="cell" style="left:664.9px;top:449.4px">2020-09-08<br>23:04:25</div>
<div class="cell" style="left:729.9px;top:455.1px">223.101.21.147</div>
<div class="av" style="left:274.6px;top:453.5px"><svg width="13.4" height="13.4" viewBox="0 0 20 20"><path d="M4 3.5h3.6l2.4 5 2.4-5H16l-4.2 7.5v6h-3.6v-6z" fill="#ff2d55" transform="translate(-0.9,0.6)"/><path d="M4 3.5h3.6l2.4 5 2.4-5H16l-4.2 7.5v6h-3.6v-6z" fill="#25f4ee" transform="translate(0.9,-0.3)"/><path d="M4 3.5h3.6l2.4 5 2.4-5H16l-4.2 7.5v6h-3.6v-6z" fill="#fff"/><circle cx="3.5" cy="15.5" r="1" fill="#ff2d55"/></svg></div>
<div class="lab" style="left:797.3px;top:455.5px">正常</div>
<div class="ab o" style="left:827.1px;top:448.2px;width:19.5px">拉黑</div>
<div class="ab o" style="left:848.8px;top:448.2px;width:19.8px">禁用</div>
<div class="ab bl" style="left:870.9px;top:448.2px;width:32.1px">设置超管</div>
<div class="ab bl" style="left:905.9px;top:448.2px;width:32.2px">取消热门</div>
<div class="ab bl" style="left:941px;top:448.2px;width:19.6px">推荐</div>
<div class="ab bl" style="left:963px;top:448.2px;width:39.1px">开启僵尸粉</div>
<div class="ab bl" style="left:827.1px;top:460.2px;width:45.7px">设置为僵尸粉</div>
<div class="ab dk" style="left:875.1px;top:460.2px;width:19.6px">编辑</div>
<div class="ab rd" style="left:896.9px;top:460.2px;width:19.5px">删除</div>
<div class="cb" style="left:119px;top:489.6px"></div>
<div class="cell" style="left:136.1px;top:488.4px">37187</div>
<div class="cell" style="left:167.7px;top:488.4px">15800158005</div>
<div class="cell" style="left:227.1px;top:488.4px"><span class="cj">小黑</span></div>
<div class="cell" style="left:356.9px;top:488.4px">0</div>
<div class="cell" style="left:398.2px;top:488.4px">0</div>
<div class="cell" style="left:429.9px;top:488.4px">0.00</div>
<div class="cell" style="left:478.2px;top:488.4px">0</div>
<div class="cell" style="left:562.9px;top:488.4px">pc</div>
<div class="cell" style="left:601.2px;top:482.8px">2020-07-09<br>13:25:34</div>
<div class="cell" style="left:664.9px;top:482.8px">1970-01-01<br>08:00:00</div>
<div class="abs" style="left:274.6px;top:485.5px;width:13.4px;height:13.8px;border:1px solid #d6d6d6;background:#fff"><svg class="abs" style="left:1.5px;top:1.5px" width="9" height="9" viewBox="0 0 18 18"><path d="M1 1h10l4 4v3L9 14H1z" fill="#b9d3f0"/><path d="M1 14q3-6 9-5l-5 6z" fill="#3c9b3c"/><path d="M11 1v4h4" fill="#eee" stroke="#999" stroke-width="0.8"/><path d="M9 15l6-6v5z" fill="#3c9b3c"/></svg></div>
<div class="lab" style="left:797.3px;top:488.8px">正常</div>
<div class="ab o" style="left:827.1px;top:481.5px;width:19.5px">拉黑</div>
<div class="ab o" style="left:848.8px;top:481.5px;width:19.8px">禁用</div>
<div class="ab bl" style="left:870.9px;top:481.5px;width:32.1px">设置超管</div>
<div class="ab bl" style="left:905.9px;top:481.5px;width:32.2px">取消热门</div>
<div class="ab bl" style="left:941px;top:481.5px;width:32.2px">取消推荐</div>
<div class="ab bl" style="left:975.6px;top:481.5px;width:39.1px">开启僵尸粉</div>
<div class="ab bl" style="left:827.1px;top:493.5px;width:45.7px">设置为僵尸粉</div>
<div class="ab dk" style="left:875.1px;top:493.5px;width:19.6px">编辑</div>
<div class="ab rd" style="left:896.9px;top:493.5px;width:19.5px">删除</div>
<div class="abs" style="left:821px;top:453px;font-size:29px;line-height:36px;font-weight:900;font-style:italic;color:#6e6e6e;-webkit-text-stroke:1.2px #6e6e6e;opacity:0.42;white-space:nowrap;transform:scaleX(1.31);transform-origin:0 0">亿码源码网</div>
<div class="abs" style="left:920px;top:476px;font-family:&quot;Liberation Sans&quot;,sans-serif;font-size:22px;line-height:22px;font-weight:bold;font-style:italic;color:#6e6e6e;-webkit-text-stroke:0.5px #6e6e6e;opacity:0.42;white-space:nowrap;letter-spacing:-0.3px;transform:scale(1.1,1.55);transform-origin:0 0">ewt.com</div>
</body></html>
